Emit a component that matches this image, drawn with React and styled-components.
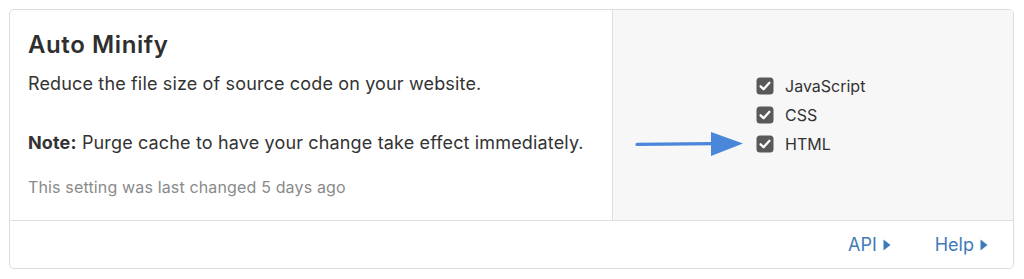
import React from 'react';
import styled, {createGlobalStyle} from 'styled-components';

const GlobalStyle = createGlobalStyle`
  html, body {
    margin: 0;
    padding: 0;
    background: #fff;
  }
  body {
    font-family: "Inter", "Liberation Sans", Arial, sans-serif;
    color: #333;
  }
`;

const options = ['JavaScript', 'CSS', 'HTML'];

const CheckIcon = () => (
  <svg width="18" height="18" viewBox="0 0 18 18">
    <rect x="0.5" y="0.5" width="17" height="17" rx="3.5" fill="#595959" />
    <path d="M4.6 9.3 L7.6 12.2 L13.4 5.8" fill="none" stroke="#fff" strokeWidth="2.3" strokeLinecap="round" strokeLinejoin="round" />
  </svg>
);

const Arrow = () => (
  <svg width="110" height="28" viewBox="0 0 110 28">
    <path d="M2 14.4 L78 13.6" stroke="#4a86d9" strokeWidth="3.2" strokeLinecap="round" />
    <path d="M76 2 L108 13.5 L76 26 Z" fill="#4a86d9" />
  </svg>
);

const Caret = () => (
  <svg width="8" height="12" viewBox="0 0 8 12">
    <path d="M0.5 0.5 L7.5 6 L0.5 11.5 Z" fill="currentColor" />
  </svg>
);

export default function App() {
  return (
    <>
      <GlobalStyle />
      <Page>
        <Card>
          <Body>
            <Info>
              <Title>Auto Minify</Title>
              <Text>Reduce the file size of source code on your website.</Text>
              <Text $spaced>
                <b>Note:</b> Purge cache to have your change take effect immediately.
              </Text>
              <Meta>This setting was last changed 5 days ago</Meta>
            </Info>
            <Control>
              <Group>
                <ArrowSlot>
                  <Arrow />
                </ArrowSlot>
                <List>
                  {options.map((name) => (
                    <Option key={name}>
                      <CheckIcon />
                      <span>{name}</span>
                    </Option>
                  ))}
                </List>
              </Group>
            </Control>
          </Body>
          <Footer>
            <Link>API <Caret /></Link>
            <Link>Help <Caret /></Link>
          </Footer>
        </Card>
      </Page>
    </>
  );
}

const Page = styled.div`
  padding: 9px 10px 10px 9px;
  width: 1024px;
  box-sizing: border-box;
`;

const Card = styled.div`
  border: 1px solid #dcdcdc;
  border-radius: 5px;
  overflow: hidden;
  height: 260px;
  box-sizing: border-box;
  display: flex;
  flex-direction: column;
`;

const Body = styled.div`
  display: flex;
  height: 210px;
  border-bottom: 1px solid #dedede;
`;

const Info = styled.div`
  width: 603px;
  border-right: 1px solid #dedede;
  padding: 21px 0 0 18px;
  box-sizing: border-box;
`;

const Title = styled.h2`
  margin: 0;
  font-size: 24px;
  line-height: 28px;
  font-weight: 600;
  color: #2f2f2f;
  letter-spacing: 0.6px;
`;

const Text = styled.p`
  margin: ${({$spaced}) => ($spaced ? '35px' : '13px')} 0 0;
  font-size: 18px;
  line-height: 24px;
  letter-spacing: 0.15px;
  color: #333;

  b {
    font-weight: 700;
  }
`;

const Meta = styled.p`
  margin: 22px 0 0;
  font-size: 16px;
  line-height: 20px;
  letter-spacing: 0.15px;
  color: #8a8a8a;
`;

const Control = styled.div`
  flex: 1;
  background: #f7f7f8;
  display: flex;
  align-items: center;
  padding-left: 22px;
`;

const Group = styled.div`
  display: flex;
  align-items: flex-end;
`;

const ArrowSlot = styled.div`
  display: flex;
  margin-right: 11px;
  margin-bottom: -5px;
`;

const List = styled.div`
  display: flex;
  flex-direction: column;
  gap: 11px;
`;

const Option = styled.label`
  display: flex;
  align-items: center;
  gap: 11px;
  font-size: 16px;
  color: #333;
  height: 18px;
`;

const Footer = styled.div`
  flex: 1;
  display: flex;
  justify-content: flex-end;
  align-items: center;
  gap: 44px;
  padding-right: 25px;
`;

const Link = styled.a`
  display: flex;
  align-items: center;
  gap: 6px;
  font-size: 18px;
  color: #3f7ab8;
  cursor: pointer;
`;
